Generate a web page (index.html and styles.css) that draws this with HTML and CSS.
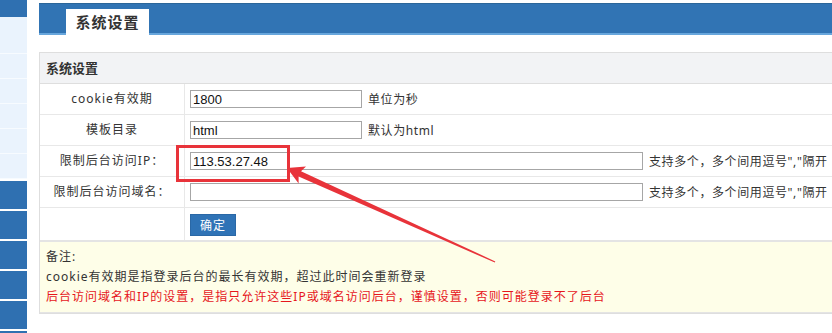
FILE: index.html
```html
<!DOCTYPE html>
<html lang="zh-CN">

<head>
    <meta charset="UTF-8">
    <meta name="viewport" content="width=device-width, initial-scale=1.0">
    <title>系统设置</title>
    <link rel="stylesheet" href="styles.css">
</head>

<body>
    <div class="page">
        <aside class="sidebar">
            <div class="side-top"></div>
            <ul class="side-light">
                <li class="first"></li><li></li><li></li><li></li><li></li><li></li>
            </ul>
            <ul class="side-dark">
                <li></li><li></li><li></li><li></li><li></li><li></li>
            </ul>
        </aside>

        <main class="main">
            <div class="topbar">
                <span class="tab">系统设置</span>
            </div>

            <div class="panel">
                <div class="panel-title">系统设置</div>

                <div class="row">
                    <div class="label">cookie有效期</div>
                    <div class="field">
                        <input class="ipt" type="text" value="1800">
                        <span class="hint">单位为秒</span>
                    </div>
                </div>
                <div class="row">
                    <div class="label">模板目录</div>
                    <div class="field">
                        <input class="ipt" type="text" value="html">
                        <span class="hint">默认为html</span>
                    </div>
                </div>
                <div class="row">
                    <div class="label">限制后台访问IP：</div>
                    <div class="field">
                        <input class="ipt long" type="text" value="113.53.27.48">
                        <span class="hint">支持多个，多个间用逗号","隔开</span>
                    </div>
                </div>
                <div class="row">
                    <div class="label">限制后台访问域名：</div>
                    <div class="field">
                        <input class="ipt long" type="text" value="">
                        <span class="hint">支持多个，多个间用逗号","隔开</span>
                    </div>
                </div>
                <div class="row last">
                    <div class="label"></div>
                    <div class="field">
                        <button class="btn" type="button">确定</button>
                    </div>
                </div>

                <div class="note">
                    <p>备注:</p>
                    <p>cookie有效期是指登录后台的最长有效期，超过此时间会重新登录</p>
                    <p class="warn">后台访问域名和IP的设置，是指只允许这些IP或域名访问后台，谨慎设置，否则可能登录不了后台</p>
                </div>
            </div>
        </main>

        <!-- 截图标注 -->
        <svg class="mark" width="832" height="333" viewBox="0 0 832 333">
            <rect x="177.5" y="146.5" width="111" height="34" fill="none" stroke="#e8333a" stroke-width="3"/>
            <polygon fill="#e8333a" points="287,168 306,166.5 301,171.2 495.3,261.4 494.8,262.6 298.6,176.6 298.6,183.5"/>
        </svg>
    </div>
</body>

</html>
```

FILE: styles.css
```css
body {
    margin: 0;
    padding: 0;
    background: #fff;
    font-family: "Noto Sans", "Noto Sans CJK SC", sans-serif;
    color: #333;
}

.page {
    position: relative;
    display: flex;
    width: 832px;
    height: 333px;
    overflow: hidden;
}

/* 左侧菜单 */
.sidebar {
    width: 27px;
    flex-shrink: 0;
}

.side-top {
    height: 17px;
    background: #2f70b1;
}

.sidebar ul {
    margin: 0;
    padding: 0;
    list-style: none;
}

.side-light li {
    height: 24px;
    background: #eaf3fd;
    border-bottom: 1px solid #f7fbff;
}

.side-light li.first {
    height: 36px;
}

.side-dark {
    padding-top: 2px !important;
}

.side-dark li {
    height: 28px;
    background: #2f70b1;
    margin-bottom: 2px;
}

/* 右侧内容 */
.main {
    margin-left: 12px;
    width: 1000px;
    flex-shrink: 0;
}

.topbar {
    margin-top: 3px;
    height: 32px;
    background: #3174b4;
    border-top: 1px solid #2b6699;
    border-bottom: 2px solid #67a6dc;
    box-sizing: border-box;
    padding: 5px 0 0 27px;
    display: flex;
    align-items: flex-end;
}

.tab {
    width: 83px;
    height: 26px;
    margin-bottom: -2px;
    background: #fff;
    font-size: 15px;
    font-weight: bold;
    letter-spacing: 1px;
    line-height: 26px;
    text-align: center;
    color: #333;
}

.panel {
    margin-top: 17px;
    border: 1px solid #dedede;
    border-right: 0;
}

.panel-title {
    height: 31px;
    box-sizing: border-box;
    border-bottom: 1px solid #dedede;
    background: #f2f3f5;
    padding-left: 6px;
    font-size: 13px;
    font-weight: bold;
    line-height: 30px;
    color: #333;
}

.row {
    display: flex;
    height: 31px;
    box-sizing: border-box;
    border-bottom: 1px solid #e8e8e8;
}

.row.last {
    height: 32px;
    border-bottom: 0;
}

.label {
    width: 145px;
    box-sizing: border-box;
    border-right: 1px solid #e8e8e8;
    font-size: 12px;
    letter-spacing: 1px;
    line-height: 30px;
    text-align: center;
    color: #333;
}

.field {
    display: flex;
    align-items: center;
    padding-left: 5px;
}

.ipt {
    width: 172px;
    height: 18px;
    box-sizing: border-box;
    margin: 0;
    padding: 0 2px;
    border: 1px solid #a6a6a6;
    font-family: "Liberation Sans", Arial, sans-serif;
    font-size: 13px;
    color: #111;
    outline: none;
}

.ipt.long {
    width: 453px;
}

.hint {
    margin-left: 6px;
    font-size: 12px;
    letter-spacing: 0.6px;
    color: #333;
    white-space: nowrap;
}

.btn {
    width: 46px;
    height: 22px;
    margin-top: 1px;
    padding: 0;
    border: 1px solid #2a68a6;
    background: #2f73b6;
    color: #fff;
    font-family: "Noto Sans", "Noto Sans CJK SC", sans-serif;
    font-size: 12px;
    letter-spacing: 1px;
}

.note {
    border-top: 2px solid #e4e4e4;
    border-bottom: 1px solid #e4e4e4;
    background: #fefee8;
    padding: 5px 6px;
}

.note p {
    margin: 0;
    font-size: 12px;
    letter-spacing: 1px;
    line-height: 20px;
    color: #333;
    white-space: nowrap;
}

.note p.warn {
    color: #e6161c;
}

/* 红色箭头标注 */
.mark {
    position: absolute;
    left: 0;
    top: 0;
    pointer-events: none;
}
```
